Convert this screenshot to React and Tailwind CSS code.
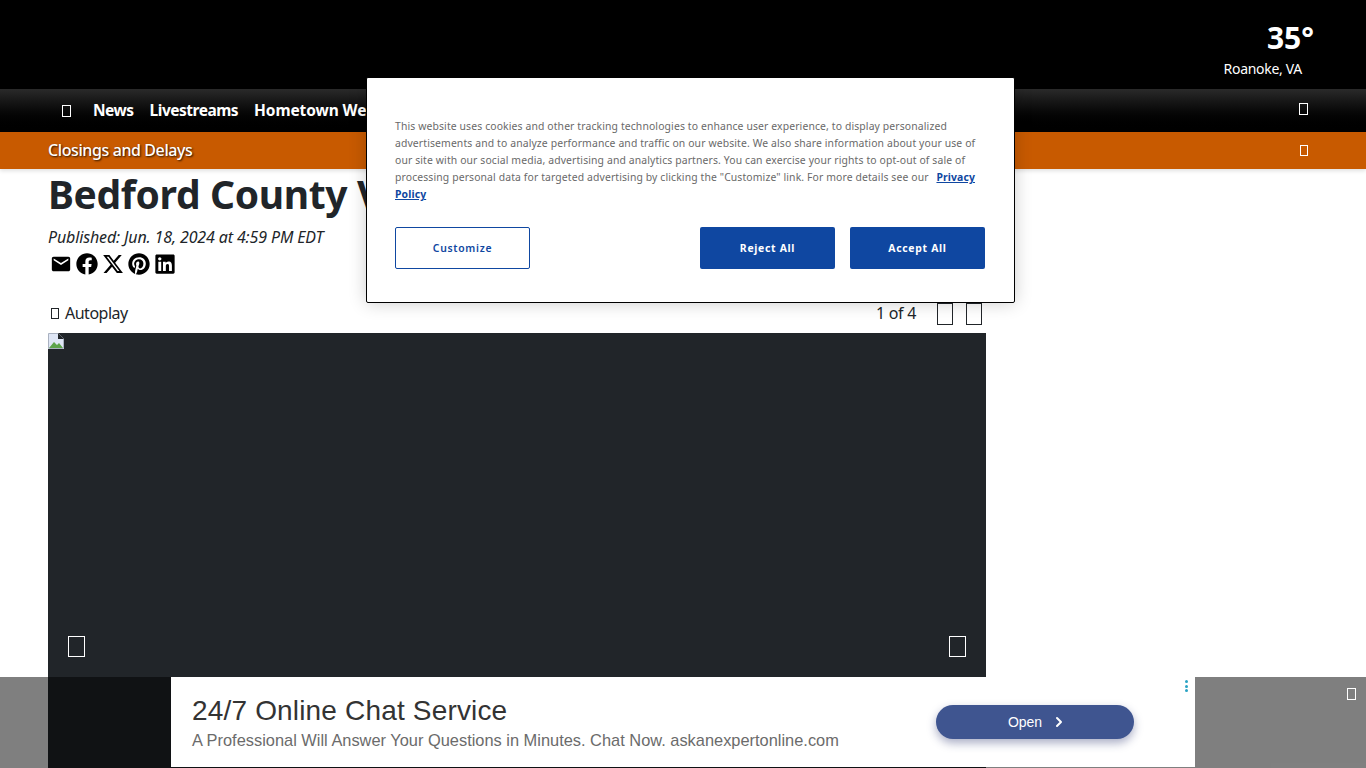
import { FaFacebook, FaPinterest, FaLinkedin } from 'react-icons/fa';
import { FaXTwitter } from 'react-icons/fa6';
import { MdEmail } from 'react-icons/md';
import { ChevronRight } from 'lucide-react';

const bodyFont = "font-['Noto_Sans','Open_Sans',sans-serif]";

function Tofu({ className }) {
  return <span className={`inline-block border border-current shrink-0 ${className}`} />;
}

function BrokenImage() {
  return (
    <svg width="16" height="16" viewBox="0 0 16 16" className="block">
      <path d="M0 0h10l6 6v10H0z" fill="#fff" />
      <path d="M0.5 0.5h9.5l5.5 5.5v9.5H0.5z" fill="#dfe6f5" stroke="#a9b1c0" />
      <path d="M1 15l5-6 3 3 2-2 4 5z" fill="#5da34a" />
      <path d="M10 0v6h6z" fill="#212529" />
    </svg>
  );
}

function CookieBanner() {
  return (
    <div className="absolute left-[366px] top-[77px] w-[649px] h-[226px] bg-white border border-black rounded-[2px] shadow-[0_0_18px_rgba(0,0,0,0.2)] pl-[28px] pr-[29px] pt-[40px]">
      <p className="text-[10.4px] leading-[17px] tracking-[0.125px] text-[#696969] w-[590px] font-['Noto_Sans',sans-serif]">
        This website uses cookies and other tracking technologies to enhance user experience, to display personalized advertisements and to analyze performance and traffic on our website. We also share information about your use of our site with our social media, advertising and analytics partners. You can exercise your rights to opt-out of sale of processing personal data for targeted advertising by clicking the "Customize" link. For more details see our{' '}
        <a className="font-bold underline text-[#0f47a1] ml-[5px]">Privacy Policy</a>
      </p>
      <div className="flex items-center mt-[24px] text-[10.4px] font-bold tracking-[0.7px]">
        <button className="w-[135px] h-[42px] pt-[1px] border border-[#0f47a1] rounded-[2px] text-[#0f47a1] font-semibold">Customize</button>
        <button className="ml-auto w-[135px] h-[42px] pt-[1px] bg-[#0f47a1] rounded-[2px] text-white">Reject All</button>
        <button className="ml-[15px] w-[135px] h-[42px] pt-[1px] bg-[#0f47a1] rounded-[2px] text-white">Accept All</button>
      </div>
    </div>
  );
}

function AdBar() {
  return (
    <div className="absolute left-0 right-0 top-[677px] h-[91px] bg-black/50 flex justify-center font-['Liberation_Sans',sans-serif]">
      <div className="relative w-[1024px] h-[90px] bg-white flex items-center pl-[21px] pr-[61px]">
        <div className="flex-1">
          <div className="text-[28px] leading-[32px] text-[#333] tracking-[0.17px]">24/7 Online Chat Service</div>
          <div className="text-[16.4px] leading-[20px] text-[#6b6b6b] mt-[3px]">A Professional Will Answer Your Questions in Minutes. Chat Now. askanexpertonline.com</div>
        </div>
        <button className="w-[198px] h-[34px] pl-[5px] rounded-full bg-[#3f5590] text-white text-[14px] flex items-center justify-center gap-[9px] shadow-[0_4px_10px_rgba(40,50,110,0.4)]">
          Open <ChevronRight size={16} strokeWidth={3} />
        </button>
        <div className="absolute right-[7px] top-[3px] flex flex-col gap-[1.5px]">
          <span className="w-[3px] h-[3px] rounded-full bg-[#2aa3c4]" />
          <span className="w-[3px] h-[3px] rounded-full bg-[#2aa3c4]" />
          <span className="w-[3px] h-[3px] rounded-full bg-[#2aa3c4]" />
        </div>
      </div>
      <Tofu className="absolute right-[10px] top-[11px] w-[9px] h-[12px] text-white" />
    </div>
  );
}

export default function App() {
  return (
    <div className={`relative w-full h-[768px] overflow-hidden bg-white ${bodyFont}`}>
      {/* Weather header */}
      <header className="h-[89px] bg-black flex justify-end text-white pr-[52px]">
        <div className="flex flex-col items-end">
          <div className="text-[30px] leading-[40px] font-bold mt-[18px]">35°</div>
          <div className="text-[14px] leading-[20px] tracking-[-0.3px] mt-[1px] mr-[12px]">Roanoke, VA</div>
        </div>
      </header>

      {/* Nav */}
      <nav className="h-[43px] bg-gradient-to-b from-[#2a2a2a] to-black flex items-center text-white pl-[62px] pr-[58px]">
        <Tofu className="w-[9px] h-[12px]" />
        <div className="flex items-center gap-[16px] ml-[22px] text-[15.5px] tracking-[-0.5px] font-bold mt-[1px]">
          <a>News</a>
          <a>Livestreams</a>
          <a className="tracking-[-0.1px]">Hometown Weather</a>
        </div>
        <Tofu className="ml-auto w-[9px] h-[12px] -mt-[3px]" />
      </nav>

      {/* Closings */}
      <div className="h-[37px] bg-[#c85a00] flex items-center text-white pl-[48px] pr-[58px] shadow-[0_2px_4px_rgba(0,0,0,0.12)]">
        <a className="text-[16px] tracking-[-0.4px] font-medium -mt-[1px] [text-shadow:1px_1px_2px_rgba(0,0,0,0.8)]">Closings and Delays</a>
        <Tofu className="ml-auto w-[8px] h-[11px]" />
      </div>

      {/* Article */}
      <main className="w-[938px] ml-[48px] text-[#212529]">
        <h1 className="text-[39px] leading-[48px] tracking-[-0.35px] font-bold mt-[1px] whitespace-nowrap">Bedford County Veterans</h1>
        <div className="text-[16px] leading-[24px] tracking-[-0.13px] italic mt-[7px]">Published: Jun. 18, 2024 at 4:59 PM EDT</div>
        <div className="flex items-center gap-[4px] mt-[2px] ml-[2px] text-black h-[26px]">
          <MdEmail size={22} />
          <FaFacebook size={22} />
          <FaXTwitter size={22} />
          <FaPinterest size={22} />
          <FaLinkedin size={22} />
        </div>
        <div className="flex items-center h-[40px] mt-[16px] text-[16px]">
          <Tofu className="w-[8px] h-[11px] ml-[3px] mr-[6px]" />
          <span className="tracking-[-0.5px]">Autoplay</span>
          <span className="ml-auto tracking-[-0.3px]">1 of 4</span>
          <Tofu className="ml-[21px] mt-[2px] w-[16px] h-[22px] border-[#777]" />
          <Tofu className="ml-[13px] mt-[2px] mr-[4px] w-[16px] h-[22px] border-[#777]" />
        </div>
        <div className="h-[435px] bg-[#212529] flex flex-col">
          <BrokenImage />
          <div className="flex justify-between mt-[287px] px-[20px] text-white">
            <Tofu className="w-[17px] h-[21px]" />
            <Tofu className="w-[17px] h-[21px]" />
          </div>
        </div>
      </main>

      <CookieBanner />
      <AdBar />
    </div>
  );
}
